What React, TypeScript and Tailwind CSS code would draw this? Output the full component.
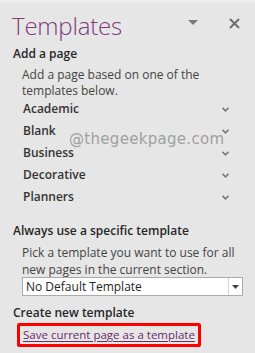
const templateGroups = ["Academic", "Blank", "Business", "Decorative", "Planners"]

function SmallChevron() {
  return (
    <svg width="7" height="5" viewBox="0 0 7 5" className="text-[#7a7a7a]">
      <path d="M0.5 0.8 L3.5 3.8 L6.5 0.8" fill="none" stroke="currentColor" strokeWidth="1.6" />
    </svg>
  )
}

export default function TemplatesPane() {
  return (
    <div
      className="relative w-[255px] h-[353px] overflow-hidden bg-[#e6e6e6] text-[#444444]"
      style={{ fontFamily: '"Open Sans", "Noto Sans", sans-serif' }}
    >
      <div className="h-[3px] bg-[#ececec]" />

      {/* header */}
      <div className="flex items-center h-[40px] pt-[5px] pl-[12px] pr-[15px]">
        <h1 className="flex-1 text-[24px] font-light leading-none text-[#80397b] tracking-[-0.2px]">Templates</h1>
        <svg width="10" height="6" viewBox="0 0 10 6" className="mr-[31px] mt-[-6px]">
          <path d="M0 0 H10 L5 5 Z" fill="#7a7a7a" />
        </svg>
        <svg width="11" height="11" viewBox="0 0 11 11" className="mt-[-4px]">
          <path d="M1 1 L10 10 M10 1 L1 10" stroke="#6e6e6e" strokeWidth="2" />
        </svg>
      </div>

      <div className="pl-[13px] pr-[12px]">
        <h2 className="mt-[3px] text-[12px] font-semibold leading-[16px] text-[#262626]">Add a page</h2>
        <p className="mt-[5px] pl-[9px] text-[12px] leading-[16px] text-[#444444]">
          Add a page based on one of the templates below.
        </p>

        <ul className="mt-[-1px] pl-[10px] pr-[14px]">
          {templateGroups.map((name) => (
            <li key={name} className="flex items-center justify-between h-[22px]">
              <span className="text-[12px] font-semibold text-[#333333]">{name}</span>
              <SmallChevron />
            </li>
          ))}
        </ul>

        <h2 className="mt-[15px] text-[12px] font-semibold leading-[16px] text-[#262626]">
          Always use a specific template
        </h2>
        <p className="mt-[5px] pl-[9px] text-[12px] leading-[17px] text-[#444444]">
          Pick a template you want to use for all new pages in the current section.
        </p>

        <div className="ml-[9px] mt-[-1px] flex h-[19px] w-[221px] border border-[#ababab] bg-white">
          <span className="flex-1 pl-[3px] text-[12px] leading-[17px] text-[#262626]">No Default Template</span>
          <span className="flex w-[14px] items-center justify-center border-l border-[#d4d4d4]">
            <svg width="7" height="4" viewBox="0 0 7 4">
              <path d="M0 0 H7 L3.5 4 Z" fill="#444444" />
            </svg>
          </span>
        </div>

        <h2 className="mt-[9px] text-[12px] font-semibold leading-[16px] text-[#262626]">Create new template</h2>
        <div className="ml-[4px] mt-[-2px] inline-flex h-[24px] items-center rounded-[2px] border-[3px] border-[#ff0000] px-[3px]">
          <a className="text-[11.5px] text-[#6b2a66] underline underline-offset-[2px]">Save current page as a template</a>
        </div>
      </div>

      {/* watermark */}
      <div
        className="absolute left-[69px] top-[129px] text-[15px] leading-[20px] text-[#a0a0a0] tracking-[0.3px]"
        style={{ fontFamily: '"DejaVu Sans", sans-serif' }}
      >
        @thegeekpage.com
      </div>
    </div>
  )
}
